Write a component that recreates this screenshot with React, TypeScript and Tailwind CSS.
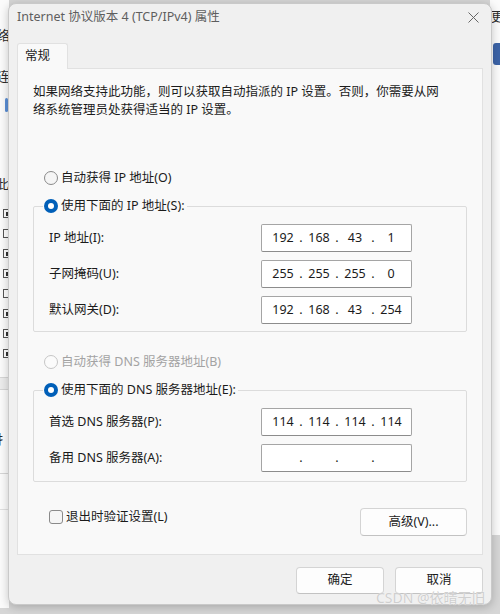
import { Fragment } from "react";

// Windows 11 style radio dot
function Radio({ checked, disabled }: { checked?: boolean; disabled?: boolean }) {
  if (checked) {
    return (
      <span className="w-[14px] h-[14px] shrink-0 rounded-full bg-[#005fb8] flex items-center justify-center">
        <span className="w-[6px] h-[6px] rounded-full bg-white" />
      </span>
    );
  }
  return (
    <span
      className={
        disabled
          ? "w-[14px] h-[14px] shrink-0 rounded-full border border-[#c6c6c6] bg-[#fbfbfb]"
          : "w-[14px] h-[14px] shrink-0 rounded-full border border-[#8a8a8a] bg-[#f5f5f5]"
      }
    />
  );
}

// IPv4 address box: four centred octets with dots between
function IpField({ parts }: { parts: string[] }) {
  return (
    <div className="w-[151px] h-[28px] shrink-0 flex items-center pl-[7px] rounded-[2px] border border-[#a5a5a5] border-b-[#8c8c8c] bg-white">
      {parts.map((p, i) => (
        <Fragment key={i}>
          {i > 0 && <span className="w-[8px] text-center">.</span>}
          <span className="w-[28px] text-center">{p}</span>
        </Fragment>
      ))}
    </div>
  );
}

function FieldRow({ label, parts }: { label: string; parts: string[] }) {
  return (
    <div className="flex items-center">
      <span className="w-[212px] shrink-0">{label}</span>
      <IpField parts={parts} />
    </div>
  );
}

function Button({ label, wide }: { label: string; wide?: boolean }) {
  return (
    <button
      className={
        wide
          ? "w-[107px] h-[28px] rounded-[4px] border border-[#d4d4d4] border-b-[#c2c2c2] bg-[#fdfdfd] text-[#1b1b1b]"
          : "w-[88px] h-[27px] rounded-[4px] border border-[#d4d4d4] border-b-[#c2c2c2] bg-[#fdfdfd] text-[#1b1b1b]"
      }
    >
      {label}
    </button>
  );
}

// Slivers of the windows lying behind the dialog
function LeftBackWindow() {
  const boxes = [true, false, true, true, false, true, true, true];
  return (
    <div className="absolute left-0 top-0 w-[9px] h-[608px] overflow-hidden bg-[#fbfbfb] text-[13px] leading-[18px] text-[#2b2b2b]">
      <div className="mt-[26px] -ml-[3px] whitespace-nowrap">络</div>
      <div className="mt-[23px] -ml-[3px] whitespace-nowrap">连</div>
      <div className="mt-[13px] ml-[5px] w-[3px] h-[14px] rounded-full bg-[#5b8fd6]" />
      <div className="mt-[63px] -ml-[4px] whitespace-nowrap">此</div>
      <div className="mt-[16px] ml-[3px] flex flex-col gap-[11px]">
        {boxes.map((on, i) => (
          <span
            key={i}
            className="w-[9px] h-[9px] border border-[#555] bg-white flex items-center justify-center"
          >
            {on && <span className="w-[4px] h-[4px] bg-[#333]" />}
          </span>
        ))}
      </div>
      <div className="mt-[19px] h-[13px] border-y border-[#d6d6d6] bg-[#ececec]" />
      <div className="mt-[40px] -ml-[4px] whitespace-nowrap">扌</div>
      <div className="mt-[25px] border-t border-[#d6d6d6]" />
      <div className="mt-[35px] border-t border-[#e0e0e0]" />
    </div>
  );
}

function RightBackWindow() {
  return (
    <div className="absolute right-0 top-0 w-[10px] h-[535px] overflow-hidden bg-[#fbfbfb]">
      <div className="mt-[7px] ml-[1px] text-[13px] leading-[18px] text-[#2b2b2b] whitespace-nowrap">更</div>
      <div className="mt-[18px] ml-[3px] w-[10px] h-[22px] rounded-l-[3px] bg-[#3c63a6]" />
    </div>
  );
}

export default function App() {
  return (
    <div className="relative w-[500px] h-[614px] overflow-hidden bg-[#d6d6d6] font-['Noto_Sans','Noto_Sans_CJK_SC',sans-serif] text-[12.5px] text-[#1b1b1b]">
      <LeftBackWindow />
      <RightBackWindow />

      {/* Properties dialog */}
      <div className="absolute left-[8px] top-[3px] w-[484px] flex flex-col rounded-[8px] border border-[#c9c9c9] bg-[#f0f0f0] shadow-[0_2px_10px_rgba(0,0,0,0.22)]">
        {/* Title bar */}
        <div className="h-[27px] flex items-center justify-between pl-[8px] pr-[12px]">
          <span className="text-[#5e5e5e]">Internet 协议版本 4 (TCP/IPv4) 属性</span>
          <svg width="11" height="11" viewBox="0 0 11 11" fill="none" stroke="#666" strokeWidth={1}>
            <path d="M0.5 0.5l10 10M10.5 0.5l-10 10" />
          </svg>
        </div>

        {/* Tab strip */}
        <div className="pt-[12px] pl-[8px] flex">
          <div className="relative z-10 -mb-px h-[26px] w-[51px] pl-[7px] flex items-center rounded-t-[3px] border border-b-0 border-[#e1e1e1] bg-[#f9f9f9]">
            常规
          </div>
        </div>

        {/* Tab page */}
        <div className="mx-[8px] flex flex-col border border-[#e1e1e1] bg-[#f9f9f9] pt-[14px] px-[15px] pb-[18px]">
          <p className="leading-[18px] whitespace-nowrap">
            如果网络支持此功能，则可以获取自动指派的 IP 设置。否则，你需要从网
            <br />
            络系统管理员处获得适当的 IP 设置。
          </p>

          <label className="mt-[50px] ml-[11px] h-[18px] flex items-center gap-[3px]">
            <Radio />
            自动获得 IP 地址(O)
          </label>

          <fieldset className="mt-[10px] w-[434px] border border-[#dcdcdc] rounded-[2px]">
            <legend className="ml-[9px] pl-[1px] pr-[2px]">
              <span className="h-[18px] flex items-center gap-[3px]">
                <Radio checked />
                使用下面的 IP 地址(S):
              </span>
            </legend>
            <div className="pt-[9px] pb-[7px] pl-[15px] flex flex-col gap-[8px]">
              <FieldRow label="IP 地址(I):" parts={["192", "168", "43", "1"]} />
              <FieldRow label="子网掩码(U):" parts={["255", "255", "255", "0"]} />
              <FieldRow label="默认网关(D):" parts={["192", "168", "43", "254"]} />
            </div>
          </fieldset>

          <label className="mt-[21px] ml-[11px] h-[18px] flex items-center gap-[3px] text-[#a3a3a3]">
            <Radio disabled />
            自动获得 DNS 服务器地址(B)
          </label>

          <fieldset className="mt-[10px] w-[434px] border border-[#dcdcdc] rounded-[2px]">
            <legend className="ml-[9px] pl-[1px] pr-[2px]">
              <span className="h-[18px] flex items-center gap-[3px]">
                <Radio checked />
                使用下面的 DNS 服务器地址(E):
              </span>
            </legend>
            <div className="pt-[9px] pb-[9px] pl-[15px] flex flex-col gap-[8px]">
              <FieldRow label="首选 DNS 服务器(P):" parts={["114", "114", "114", "114"]} />
              <FieldRow label="备用 DNS 服务器(A):" parts={["", "", "", ""]} />
            </div>
          </fieldset>

          <div className="mt-[26px] flex items-start justify-between">
            <label className="ml-[16px] h-[18px] flex items-center gap-[3px]">
              <span className="w-[14px] h-[14px] rounded-[3px] border border-[#8a8a8a] bg-[#f5f5f5]" />
              退出时验证设置(L)
            </label>
            <Button label="高级(V)..." wide />
          </div>
        </div>

        {/* Dialog buttons */}
        <div className="flex justify-end gap-[11px] pt-[12px] pb-[10px] pr-[8px]">
          <Button label="确定" />
          <Button label="取消" />
        </div>
      </div>

      {/* Watermark */}
      <div className="absolute left-[376px] top-[589px] text-[14px] leading-[18px] text-[#cfcfcf] whitespace-nowrap [text-shadow:0_0_1px_#ffffff]">
        CSDN @依晴无旧
      </div>
    </div>
  );
}
